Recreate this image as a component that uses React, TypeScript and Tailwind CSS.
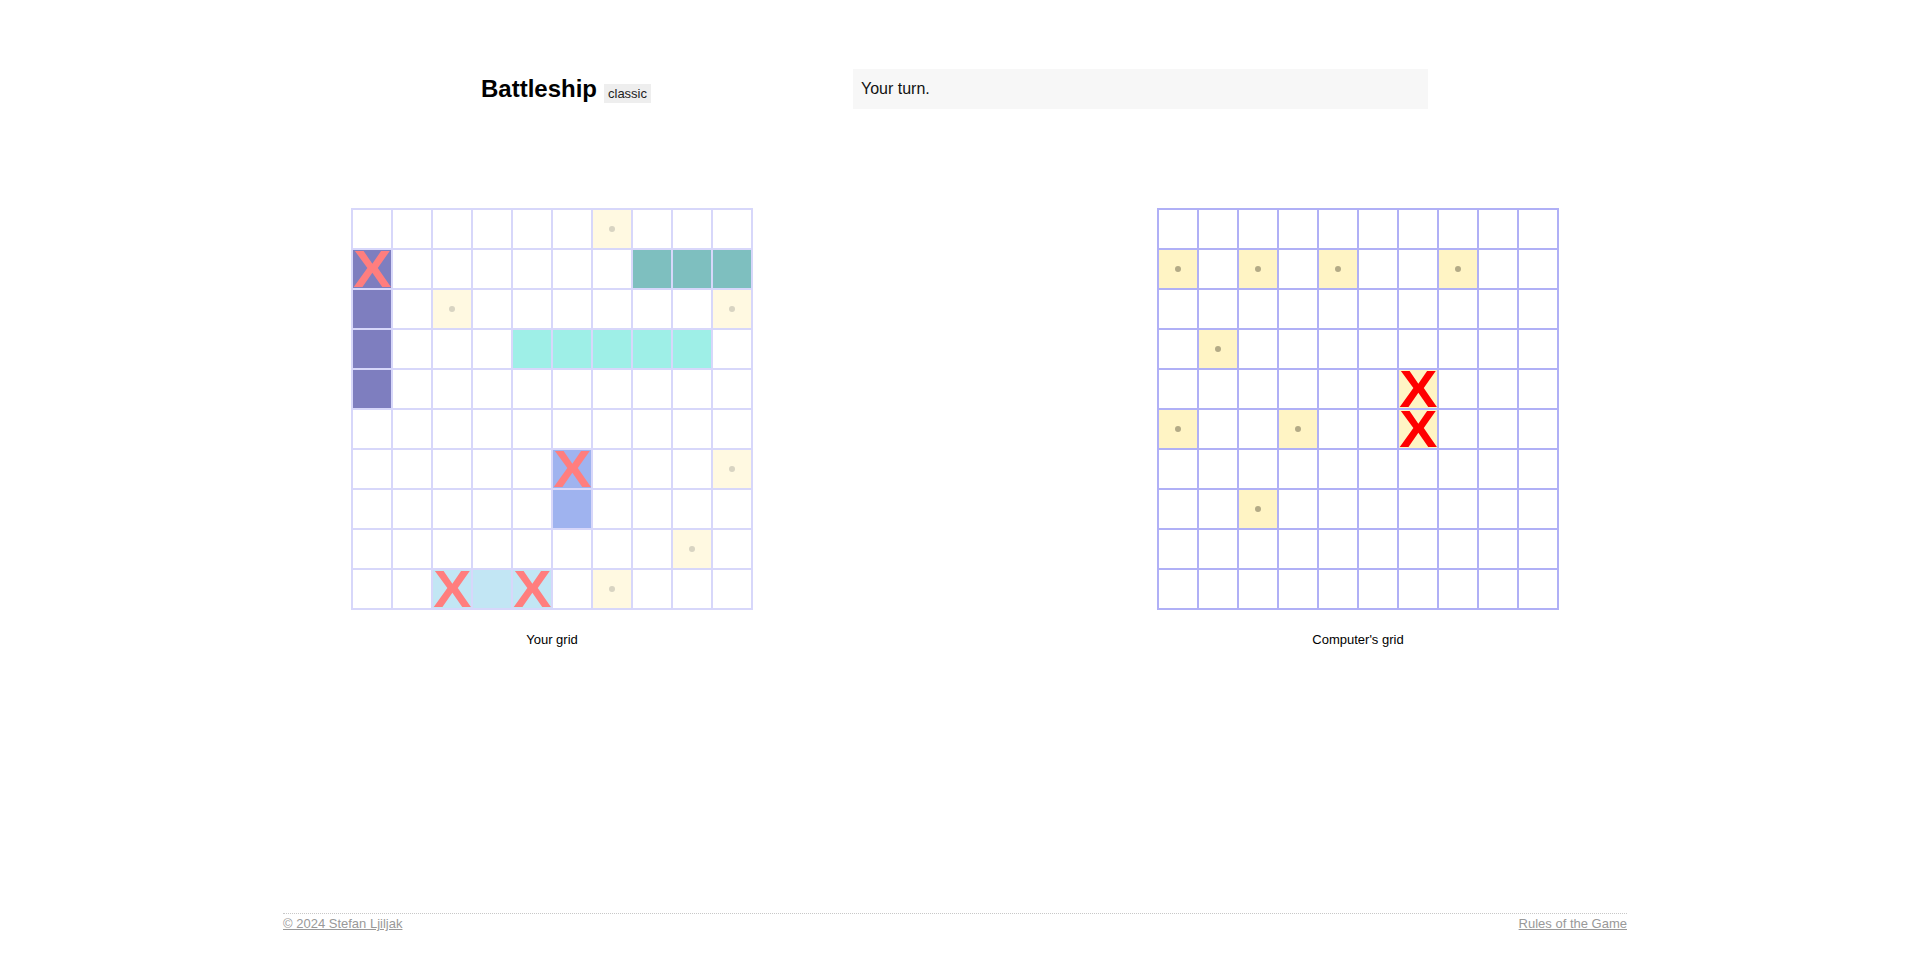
import React from "react";

type Cell = { bg?: string; miss?: boolean; hit?: boolean };

const key = (r: number, c: number) => `${r}-${c}`;

function buildPlayer(): Record<string, Cell> {
  const m: Record<string, Cell> = {};
  const set = (r: number, c: number, v: Cell) => (m[key(r, c)] = { ...(m[key(r, c)] || {}), ...v });
  // navy ship
  [1, 2, 3, 4].forEach((r) => set(r, 0, { bg: "bg-[#000080]" }));
  set(1, 0, { hit: true });
  // teal ship
  [7, 8, 9].forEach((c) => set(1, c, { bg: "bg-[#008080]" }));
  // turquoise ship
  [4, 5, 6, 7, 8].forEach((c) => set(3, c, { bg: "bg-[#40e0d0]" }));
  // royalblue ship
  set(6, 5, { bg: "bg-[#4169e1]", hit: true });
  set(7, 5, { bg: "bg-[#4169e1]" });
  // skyblue ship
  [2, 3, 4].forEach((c) => set(9, c, { bg: "bg-[#87ceeb]" }));
  set(9, 2, { hit: true });
  set(9, 4, { hit: true });
  // misses
  [
    [0, 6],
    [2, 2],
    [2, 9],
    [6, 9],
    [8, 8],
    [9, 6],
  ].forEach(([r, c]) => set(r, c, { bg: "bg-[#fff4c4]", miss: true }));
  return m;
}

function buildComputer(): Record<string, Cell> {
  const m: Record<string, Cell> = {};
  [
    [1, 0],
    [1, 2],
    [1, 4],
    [1, 7],
    [3, 1],
    [5, 0],
    [5, 3],
    [7, 2],
  ].forEach(([r, c]) => (m[key(r, c)] = { bg: "bg-[#fff4c4]", miss: true }));
  m[key(4, 6)] = { bg: "bg-[#fff4c4]", hit: true };
  m[key(5, 6)] = { bg: "bg-[#fff4c4]", hit: true };
  return m;
}

const player = buildPlayer();
const computer = buildComputer();

function Board({ data, dim }: { data: Record<string, Cell>; dim?: boolean }) {
  const rows = Array.from({ length: 10 }, (_, i) => i);
  return (
    <div className={`border border-[#b0b0f6] grid grid-cols-[repeat(10,40px)] w-[402px] ${dim ? "opacity-50" : ""}`}>
      {rows.map((r) =>
        rows.map((c) => {
          const cell = data[key(r, c)] || {};
          return (
            <div
              key={key(r, c)}
              className={`w-10 h-10 border border-[#b0b0f6] flex items-center justify-center overflow-hidden ${cell.bg || "bg-white"}`}
            >
              {cell.hit ? (
                <span className="block text-[#ff0000] font-bold text-[52px] leading-[38px] h-[38px] scale-x-110 font-['Liberation_Sans',Arial,sans-serif]">
                  X
                </span>
              ) : cell.miss ? (
                <span className="w-[6px] h-[6px] rounded-full bg-[#b3aa86]" />
              ) : null}
            </div>
          );
        })
      )}
    </div>
  );
}

export default function App() {
  return (
    <div className="h-screen flex flex-col items-center pl-[4px] bg-white text-[#111] font-['Liberation_Sans',Arial,sans-serif]">
      <div className="w-[1344px] flex flex-col flex-1">
        <header className="flex items-center pt-[69px]">
          <div className="w-[566px] flex justify-center items-baseline gap-[7px]">
            <h1 className="text-[24px] font-bold text-black leading-[28px]">Battleship</h1>
            <span className="bg-[#eeeeee] text-[13px] leading-[15px] px-[4px] py-[2px] text-[#222] relative top-[1px]">classic</span>
          </div>
          <div className="ml-[4px] w-[575px] h-[40px] bg-[#f7f7f7] flex items-center px-[8px] text-[16px] text-[#111]">
            Your turn.
          </div>
        </header>

        <main className="flex justify-between px-[68px] mt-[99px]">
          <div className="flex flex-col items-center">
            <Board data={player} dim />
            <div className="mt-[22px] text-[13px] leading-[15px] text-black">Your grid</div>
          </div>
          <div className="flex flex-col items-center">
            <Board data={computer} />
            <div className="mt-[22px] text-[13px] leading-[15px] text-black">Computer's grid</div>
          </div>
        </main>

        <footer className="mt-auto border-t border-dotted border-[#c8c8c8] pt-[2px] pb-[22px] flex justify-between text-[13px] leading-[15px]">
          <a href="#" className="text-[#999] underline">
            © 2024 Stefan Ljiljak
          </a>
          <a href="#" className="text-[#999] underline">
            Rules of the Game
          </a>
        </footer>
      </div>
    </div>
  );
}
